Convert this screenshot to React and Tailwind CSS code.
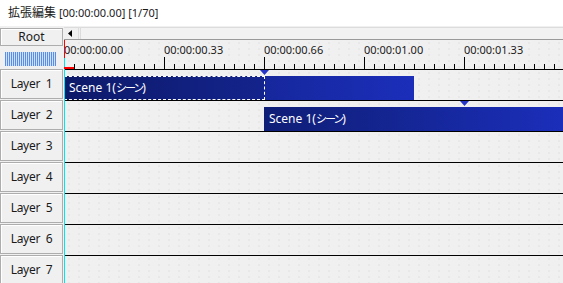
import React from 'react';

const layers = [1, 2, 3, 4, 5, 6, 7];
const labels = ['00:00:00.00', '00:00:00.33', '00:00:00.66', '00:00:01.00', '00:00:01.33'];

function Marker({ left }) {
  return (
    <svg className="absolute top-0" style={{ left }} width="9" height="5" viewBox="0 0 9 5">
      <path d="M0 0H9L4.5 5Z" fill="#2536c4" />
    </svg>
  );
}

function Clip({ width, selected }) {
  return (
    <div
      className="relative h-[24px] bg-gradient-to-r from-[#0f1e76] to-[#1b2eba] text-white text-[12px] leading-[24px] pl-[5px] whitespace-nowrap overflow-hidden"
      style={{ width }}
    >
      {selected && (
        <div className="absolute left-0 top-0 h-[24px] w-[201px] border border-dashed border-white bg-black/10" />
      )}
      <span className="relative">
        Scene 1(<span className="text-[11px] tracking-[-2px]">シーン</span>)
      </span>
    </div>
  );
}

const dots = 'bg-[radial-gradient(circle,#dedede_0.6px,transparent_0.8px)] bg-[length:10px_6px]';

export default function App() {
  return (
    <div className="w-[563px] h-[283px] overflow-hidden bg-[#f0f0f0] text-[#1a1a1a] font-['Noto_Sans','Noto_Sans_CJK_JP',sans-serif]">
      <div className="h-[26px] bg-white flex items-center pl-[8px] whitespace-pre">
        <span className="text-[12px]">拡張編集</span>
        <span className="text-[11px]"> [00:00:00.00] [1/70]</span>
      </div>

      <div className="flex">
        {/* left column */}
        <div className="w-[64px] shrink-0 pt-[2px]">
          <div className="w-[63px] h-[18px] border border-[#adadad] shadow-[inset_1px_1px_0_#fff] flex items-center justify-center text-[12px]">
            Root
          </div>
          <div className="mt-[6px] ml-[5px] w-[51px] h-[14px] bg-[repeating-linear-gradient(90deg,#5a8de6_0_1px,#cfe0fa_1px_2px)]" />
          <div className="mt-[3px] flex flex-col gap-[1px]">
            {layers.map((n) => (
              <div
                key={n}
                className="w-[63px] h-[30px] border border-[#adadad] shadow-[inset_1px_1px_0_#fff] flex items-center justify-center text-[12px] tracking-[-0.3px] whitespace-pre"
              >
                {`Layer  ${n}`}
              </div>
            ))}
          </div>
        </div>

        {/* timeline */}
        <div className="relative flex-1 min-w-0">
          <div className="mt-[1px] h-[13px] flex border-t border-[#dcdcdc] border-b border-b-[#9a9a9a]">
            <div className="w-[15px] flex items-center pl-[4px] border-r border-[#dcdcdc]">
              <svg width="4" height="7" viewBox="0 0 4 7">
                <path d="M4 0V7L0 3.5Z" fill="#000" />
              </svg>
            </div>
            <div className="ml-[1px] flex-1 bg-[#f2f2f2] border-l border-[#dcdcdc]" />
          </div>

          <div className={`relative h-[29px] ${dots}`}>
            <div className="flex pt-[2px] text-[11px] leading-[15px]">
              {labels.map((t) => (
                <div key={t} className="w-[100px] shrink-0">{t}</div>
              ))}
            </div>
            <div className="absolute left-0 right-0 bottom-0 h-[5px] bg-[repeating-linear-gradient(90deg,#000_0_1px,transparent_1px_10px)]" />
            <div className="absolute left-0 right-0 bottom-0 h-[12px] bg-[repeating-linear-gradient(90deg,#000_0_1px,transparent_1px_100px)]" />
          </div>

          {layers.map((n) => (
            <div key={n} className={`relative h-[31px] border-t border-black pt-[6px] ${dots}`}>
              {n === 1 && (
                <>
                  <Marker left={196} />
                  <Clip width={350} selected />
                </>
              )}
              {n === 2 && (
                <>
                  <Marker left={396} />
                  <div className="pl-[200px]">
                    <Clip width={299} />
                  </div>
                </>
              )}
            </div>
          ))}

          {/* cursor */}
          <div className="absolute left-0 top-[14px] h-[18px] w-[1px] bg-[#ff0000]" />
          <div className="absolute left-0 top-[32px] bottom-0 w-[1px] bg-[#00e5ee]" />
          <div className="absolute left-0 top-[41px] h-[2px] w-[10px] bg-[#ff0000]" />
        </div>
      </div>
    </div>
  );
}
